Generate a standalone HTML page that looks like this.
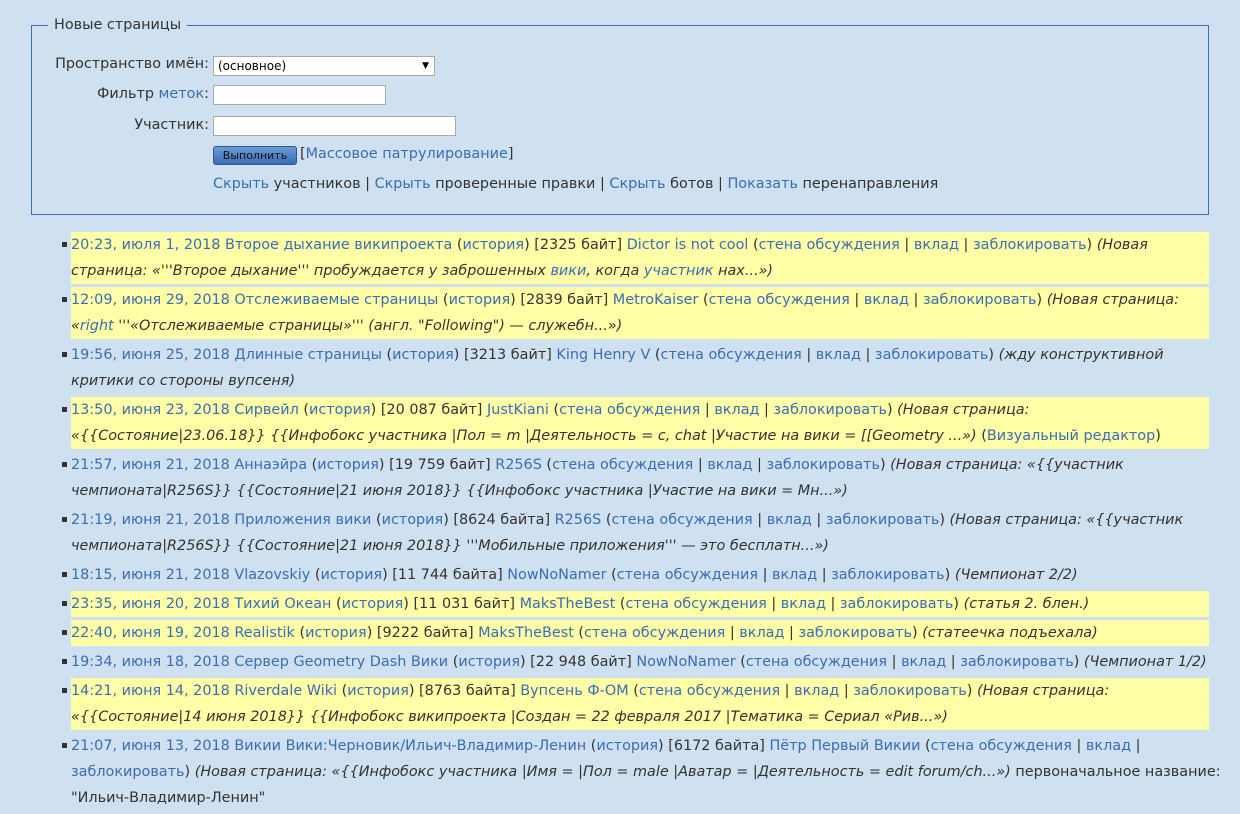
<!DOCTYPE html>
<html><head><meta charset="utf-8"><style>
body{margin:0;background:#cfe0f1;font-family:"DejaVu Sans","Liberation Sans",sans-serif;font-size:14.4px;color:#333;width:1240px;height:810px;overflow:hidden;position:relative}
a{color:#3a6db3;text-decoration:none}
fieldset{position:absolute;left:31px;top:17px;width:1178px;height:198px;border:1px solid #3a6db3;margin:0;padding:0;box-sizing:border-box}
legend{margin-left:16px;padding:0 6px;font-size:14.4px;color:#333}
.row{position:absolute;white-space:nowrap}
.lbl{position:absolute;text-align:right;width:177px;left:0}
input.t{position:absolute;height:20px;border:1px solid #aaa;background:#fff;box-sizing:border-box}
.sel{position:absolute;left:181px;top:23px;width:222px;height:20px;background:#fff;border:1px solid #aaa;box-sizing:border-box;font-size:12px;line-height:18px;padding-left:4px;color:#000}
.sel span{position:absolute;right:5px;top:0;font-size:9px}
.btn{position:absolute;left:181px;top:113px;width:84px;height:19px;border-radius:3px;background:linear-gradient(#6c9ad6,#3a6db3);border:1px solid #2b5796;box-sizing:border-box;font-size:11px;line-height:17px;text-align:center;color:#111}
ul{position:absolute;left:71px;top:232px;margin:0;padding:0;list-style:none;width:1138px}
li{line-height:26px;margin-bottom:3px;white-space:nowrap;position:relative}
li:before{content:"";position:absolute;left:-9px;top:10px;width:5px;height:5px;background:#333}
li.y{background:#ffffa8}
i{font-style:italic}
</style></head><body>
<fieldset><legend>Новые страницы</legend>
<div class="lbl" style="top:23px">Пространство имён:</div>
<div class="sel">(основное)<span>▼</span></div>
<div class="lbl" style="top:53px">Фильтр <a>меток</a>:</div>
<input class="t" style="left:181px;top:52px;width:173px">
<div class="lbl" style="top:84px">Участник:</div>
<input class="t" style="left:181px;top:83px;width:243px">
<div class="btn">Выполнить</div>
<div class="row" style="left:268px;top:113px">[<a>Массовое патрулирование</a>]</div>
<div class="row" style="left:181px;top:143px"><a>Скрыть</a> участников | <a>Скрыть</a> проверенные правки | <a>Скрыть</a> ботов | <a>Показать</a> перенаправления</div>
</fieldset>
<ul>
<li class="y"><a>20:23, июля 1, 2018</a> <a>Второе дыхание википроекта</a> (<a>история</a>) [2325 байт] <a>Dictor is not cool</a> (<a>стена обсуждения</a> | <a>вклад</a> | <a>заблокировать</a>) <i>(Новая<br>страница: «'''Второе дыхание''' пробуждается у заброшенных <a>вики</a>, когда <a>участник</a> нах...»)</i></li>
<li class="y"><a>12:09, июня 29, 2018</a> <a>Отслеживаемые страницы</a> (<a>история</a>) [2839 байт] <a>MetroKaiser</a> (<a>стена обсуждения</a> | <a>вклад</a> | <a>заблокировать</a>) <i>(Новая страница:<br>«<a>right</a> '''«Отслеживаемые страницы»''' (англ. "Following") — служебн...»)</i></li>
<li><a>19:56, июня 25, 2018</a> <a>Длинные страницы</a> (<a>история</a>) [3213 байт] <a>King Henry V</a> (<a>стена обсуждения</a> | <a>вклад</a> | <a>заблокировать</a>) <i>(жду конструктивной<br>критики со стороны вупсеня)</i></li>
<li class="y"><a>13:50, июня 23, 2018</a> <a>Сирвейл</a> (<a>история</a>) [20 087 байт] <a>JustKiani</a> (<a>стена обсуждения</a> | <a>вклад</a> | <a>заблокировать</a>) <i>(Новая страница:<br>«{{Состояние|23.06.18}} {{Инфобокс участника |Пол = m |Деятельность = c, chat |Участие на вики = [[Geometry ...»)</i> (<a>Визуальный редактор</a>)</li>
<li><a>21:57, июня 21, 2018</a> <a>Аннаэйра</a> (<a>история</a>) [19 759 байт] <a>R256S</a> (<a>стена обсуждения</a> | <a>вклад</a> | <a>заблокировать</a>) <i>(Новая страница: «{{участник<br>чемпионата|R256S}} {{Состояние|21 июня 2018}} {{Инфобокс участника |Участие на вики = Мн...»)</i></li>
<li><a>21:19, июня 21, 2018</a> <a>Приложения вики</a> (<a>история</a>) [8624 байта] <a>R256S</a> (<a>стена обсуждения</a> | <a>вклад</a> | <a>заблокировать</a>) <i>(Новая страница: «{{участник<br>чемпионата|R256S}} {{Состояние|21 июня 2018}} '''Мобильные приложения''' — это бесплатн...»)</i></li>
<li><a>18:15, июня 21, 2018</a> <a>Vlazovskiy</a> (<a>история</a>) [11 744 байта] <a>NowNoNamer</a> (<a>стена обсуждения</a> | <a>вклад</a> | <a>заблокировать</a>) <i>(Чемпионат 2/2)</i></li>
<li class="y"><a>23:35, июня 20, 2018</a> <a>Тихий Океан</a> (<a>история</a>) [11 031 байт] <a>MaksTheBest</a> (<a>стена обсуждения</a> | <a>вклад</a> | <a>заблокировать</a>) <i>(статья 2. блен.)</i></li>
<li class="y"><a>22:40, июня 19, 2018</a> <a>Realistik</a> (<a>история</a>) [9222 байта] <a>MaksTheBest</a> (<a>стена обсуждения</a> | <a>вклад</a> | <a>заблокировать</a>) <i>(статеечка подъехала)</i></li>
<li><a>19:34, июня 18, 2018</a> <a>Сервер Geometry Dash Вики</a> (<a>история</a>) [22 948 байт] <a>NowNoNamer</a> (<a>стена обсуждения</a> | <a>вклад</a> | <a>заблокировать</a>) <i>(Чемпионат 1/2)</i></li>
<li class="y"><a>14:21, июня 14, 2018</a> <a>Riverdale Wiki</a> (<a>история</a>) [8763 байта] <a>Вупсень Ф-ОМ</a> (<a>стена обсуждения</a> | <a>вклад</a> | <a>заблокировать</a>) <i>(Новая страница:<br>«{{Состояние|14 июня 2018}} {{Инфобокс википроекта |Создан = 22 февраля 2017 |Тематика = Сериал «Рив...»)</i></li>
<li><a>21:07, июня 13, 2018</a> <a>Викии Вики:Черновик/Ильич-Владимир-Ленин</a> (<a>история</a>) [6172 байта] <a>Пётр Первый Викии</a> (<a>стена обсуждения</a> | <a>вклад</a> |<br><a>заблокировать</a>) <i>(Новая страница: «{{Инфобокс участника |Имя = |Пол = male |Аватар = |Деятельность = edit forum/ch...»)</i> первоначальное название:<br>"Ильич-Владимир-Ленин"</li>
</ul>
</body></html>
